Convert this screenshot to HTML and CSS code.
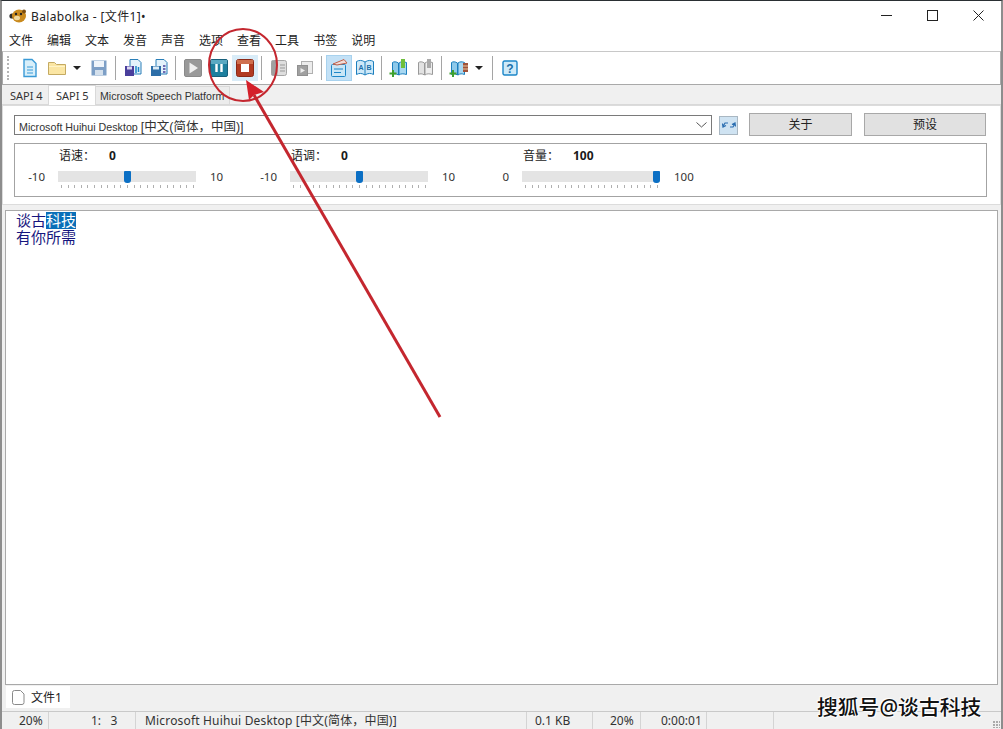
FILE: index.html
```html
<!doctype html>
<html lang="zh-CN">
<head>
  <meta charset="utf-8" />
  <title>Balabolka - [文件1]</title>
  <link rel="stylesheet" href="styles.css">
</head>
<body>
<div class="win">

  <!-- title bar -->
  <div class="titlebar">
    <svg class="appIcon" width="18" height="14" viewBox="0 0 18 14">
      <circle cx="3" cy="7" r="2.6" fill="#2b2b2b"/>
      <ellipse cx="10" cy="7" rx="7" ry="6.4" fill="#c98a1e"/>
      <ellipse cx="8" cy="9" rx="3" ry="2.2" fill="#f0d9a0"/>
      <circle cx="7" cy="5" r="1.2" fill="#222"/>
      <circle cx="12" cy="5" r="1.2" fill="#222"/>
      <circle cx="15" cy="2.5" r="2" fill="#7a4d10"/>
    </svg>
    <span class="titleText">Balabolka - [文件1]•</span>
    <div class="winBtns">
      <span class="winBtn"><svg width="11" height="11"><path d="M0 5.5H11" stroke="#222" fill="none"/></svg></span>
      <span class="winBtn"><svg width="11" height="11"><rect x=".5" y=".5" width="10" height="10" stroke="#222" fill="none"/></svg></span>
      <span class="winBtn"><svg width="11" height="11"><path d="M.5 .5L10.5 10.5M10.5 .5L.5 10.5" stroke="#222" fill="none"/></svg></span>
    </div>
  </div>

  <!-- menu -->
  <div class="menubar">
    <span>文件</span><span>编辑</span><span>文本</span><span>发音</span><span>声音</span>
    <span>选项</span><span>查看</span><span>工具</span><span>书签</span><span>说明</span>
  </div>

  <!-- toolbar -->
  <div class="toolbar">
    <span class="grip"></span>
    <span class="tb"><svg width="18" height="20" viewBox="0 0 18 20"><path d="M3 1.500H11L15 5.500V18.500H3Z" fill="#d8effa" stroke="#3a9ad6" stroke-width="1.400"/><path d="M6 9H12M6 12H12M6 15H12" stroke="#3a9ad6"/></svg></span>
    <span class="tb tbFolder"><svg width="20" height="18" viewBox="0 0 20 18"><path d="M1.500 15.500V3.500H7.500L9.500 5.500H18.500V15.500Z" fill="#fbe6a4" stroke="#c4aa62"/><path d="M2 7.500H18" stroke="#fff4c8"/></svg></span>
    <span class="tbArrow"></span>
    <span class="tb"><svg width="16" height="16" viewBox="0 0 16 16"><rect x=".5" y=".5" width="15" height="15" fill="#7d9fc6"/><rect x="3" y="1" width="10" height="6" fill="#eef4fa"/><rect x="4" y="10" width="8" height="5" fill="#d4e0ec"/></svg></span>
    <span class="sep"></span>
    <span class="tb"><svg width="20" height="20" viewBox="0 0 20 20"><path d="M7 1.500H15L18 4.500V16H7Z" fill="#e3f2fb" stroke="#2a7fb8"/><rect x="2" y="8" width="9" height="10" fill="#4a3f9c"/><rect x="4" y="8.500" width="5" height="3" fill="#dcd8f2"/><path d="M13 8V15M15.500 9V14" stroke="#1c86c8" stroke-width="1.500"/></svg></span>
    <span class="tb"><svg width="20" height="20" viewBox="0 0 20 20"><path d="M7 1.500H15L18 4.500V16H7Z" fill="#e3f2fb" stroke="#2a7fb8"/><rect x="2" y="8" width="10" height="10" fill="#2d6ea8"/><rect x="4" y="8.500" width="6" height="3" fill="#dcecf6"/><path d="M14 8H16.500M14 11H16.500M14 14H16.500" stroke="#4a3f9c" stroke-width="1.500"/></svg></span>
    <span class="sep"></span>
    <span class="tb"><svg width="18" height="18" viewBox="0 0 18 18"><rect x=".5" y=".5" width="17" height="17" rx="1.500" fill="#999" stroke="#8a8a8a"/><path d="M5.500 3.500L14 9L5.500 14.500Z" fill="#efefef"/></svg></span>
    <span class="tb"><svg width="18" height="18" viewBox="0 0 18 18"><rect x=".5" y=".5" width="17" height="17" rx="1.500" fill="#1d7f9e" stroke="#17607c"/><rect x="1" y="1" width="16" height="4" fill="#5aa9c2"/><path d="M6.500 5V13M11.500 5V13" stroke="#fff" stroke-width="2.400"/></svg></span>
    <span class="tb tbHot"><svg width="18" height="18" viewBox="0 0 18 18"><rect x=".5" y=".5" width="17" height="17" rx="2" fill="#b23b22" stroke="#8c2a18"/><rect x="1" y="1" width="16" height="4" fill="#d0704f"/><rect x="5" y="5" width="8" height="8" fill="#fff"/></svg></span>
    <span class="sep"></span>
    <span class="tb"><svg width="18" height="18" viewBox="0 0 18 18"><rect x="1.500" y="1.500" width="15" height="15" rx="2" fill="#dedede" stroke="#a5a5a5"/><rect x="1.500" y="1.500" width="6" height="15" fill="#a0a0a0"/><path d="M10 6H15M10 9H15M10 12H15" stroke="#999"/></svg></span>
    <span class="tb"><svg width="18" height="18" viewBox="0 0 18 18"><rect x="5.500" y="2.500" width="11" height="12" fill="#ececec" stroke="#b0b0b0"/><rect x="1.500" y="6.500" width="10" height="10" fill="#a0a0a0" stroke="#909090"/><path d="M4.500 9L9 11.500L4.500 14Z" fill="#eee"/></svg></span>
    <span class="sep"></span>
    <span class="tb tbOn"><svg width="20" height="20" viewBox="0 0 20 20"><rect x="2.500" y="6.500" width="14" height="12" rx="1" fill="#c9e6f6" stroke="#1c86c8"/><path d="M5 11H14M5 14.500H12" stroke="#1c86c8"/><path d="M4 6L15 1.500L18 5L8 7Z" fill="#f2dcd6" stroke="#c0604a"/></svg></span>
    <span class="tb"><svg width="20" height="18" viewBox="0 0 20 18"><path d="M10 3C7 1 4 1 1.500 2.500V15.500C4 14 7 14 10 16C13 14 16 14 18.500 15.500V2.500C16 1 13 1 10 3Z" fill="#cfe9f8" stroke="#1c7fbe"/><path d="M10 3V16" stroke="#1c7fbe"/><text x="3.500" y="10.500" class="tinyGlyph">A</text><text x="11.500" y="10.500" class="tinyGlyph">B</text></svg></span>
    <span class="sep"></span>
    <span class="tb"><svg width="20" height="20" viewBox="0 0 20 20"><path d="M3.500 4.500C5 3.500 7 3.500 9.500 5V17C7 15.500 5 15.500 3.500 16.500Z" fill="#8ec9ea" stroke="#1c7fbe"/><path d="M10 5C12 3.500 14 3.500 17.500 4.500V16.500C14 15.500 12 15.500 10 17Z" fill="#a8d8f2" stroke="#1c7fbe"/><rect x="12" y="1" width="4" height="9" fill="#6fbf3c"/><path d="M4 12V19M.5 15.500H7.500" stroke="#3fa02c" stroke-width="2"/></svg></span>
    <span class="tb"><svg width="20" height="20" viewBox="0 0 20 20"><path d="M3.500 4.500C5 3.500 7 3.500 9.500 5V17C7 15.500 5 15.500 3.500 16.500Z" fill="#e2e2e2" stroke="#999"/><path d="M10 5C12 3.500 14 3.500 17.500 4.500V16.500C14 15.500 12 15.500 10 17Z" fill="#eeeeee" stroke="#999"/><rect x="12" y="1" width="4" height="9" fill="#aaa"/></svg></span>
    <span class="sep"></span>
    <span class="tb"><svg width="20" height="20" viewBox="0 0 20 20"><path d="M2.500 4.500C4 3.500 6 3.500 8.500 5V17C6 15.500 4 15.500 2.500 16.500Z" fill="#8ec9ea" stroke="#1c7fbe"/><path d="M9 5C11 3.500 13 3.500 15.500 4.500V16.500C13 15.500 11 15.500 9 17Z" fill="#a8d8f2" stroke="#1c7fbe"/><rect x="14" y="5" width="5" height="9" fill="#a0523a"/><path d="M14 8H19M14 11H19" stroke="#e6c9a0"/><path d="M4 12V19M.5 15.500H7.500" stroke="#3fa02c" stroke-width="2"/></svg></span>
    <span class="tbArrow tbArrowWide"></span>
    <span class="sep"></span>
    <span class="tb"><svg width="16" height="16" viewBox="0 0 16 16"><rect x="1" y="1" width="14" height="14" rx="1.500" fill="#cfeaf8" stroke="#1c86c8" stroke-width="1.400"/><text x="8" y="12.500" text-anchor="middle" class="helpGlyph">?</text></svg></span>
  </div>

  <!-- engine tabs -->
  <div class="tabs">
    <span class="tab tabFirst">SAPI 4</span>
    <span class="tab tabActive">SAPI 5</span>
    <span class="tab tabLast">Microsoft Speech Platform</span>
  </div>

  <div class="panel">
    <div class="voiceRow">
      <div class="combo">
        <span>Microsoft Huihui Desktop <span class="comboCjk">[中文(简体，中国)]</span></span>
        <svg width="11" height="6"><path d="M.5 .5L5.500 5L10.500 .5" stroke="#555" fill="none"/></svg>
      </div>
      <span class="refresh"><svg width="14" height="10" viewBox="0 0 14 10"><path d="M6 3H3L1 6.500M.5 3.500L1 7L4 5.500" stroke="#2a6db0" fill="none" stroke-width="1.200"/><path d="M8 7H11L13 3.500M13.500 6.500L13 3L10 4.500" stroke="#2a6db0" fill="none" stroke-width="1.200"/></svg></span>
      <button class="btn btnAbout" type="button">关于</button>
      <button class="btn btnPreset" type="button">预设</button>
    </div>

    <div class="sliders">
      <div class="slider">
        <div class="sliderHead"><span class="sliderName">语速：</span><b>0</b></div>
        <div class="sliderRow">
          <span class="min">-10</span>
          <div class="track"><span class="thumb thumbMid"></span></div>
          <span class="max">10</span>
        </div>
        <div class="ticks"></div>
      </div>
      <div class="slider">
        <div class="sliderHead"><span class="sliderName">语调：</span><b>0</b></div>
        <div class="sliderRow">
          <span class="min">-10</span>
          <div class="track"><span class="thumb thumbMid"></span></div>
          <span class="max">10</span>
        </div>
        <div class="ticks"></div>
      </div>
      <div class="slider">
        <div class="sliderHead"><span class="sliderName">音量：</span><b>100</b></div>
        <div class="sliderRow">
          <span class="min">0</span>
          <div class="track"><span class="thumb thumbEnd"></span></div>
          <span class="max">100</span>
        </div>
        <div class="ticks"></div>
      </div>
    </div>
  </div>

  <!-- text -->
  <div class="editor">
    <div class="line">谈古<span class="sel">科技</span></div>
    <div class="line">有你所需</div>
  </div>

  <div class="docTabs">
    <span class="docTab">
      <svg width="14" height="15" viewBox="0 0 14 15"><path d="M1.500 2.500Q1.500 .5 3.500 .5H9.500L13 4V12.500Q13 14.500 11 14.500H3.500Q1.500 14.500 1.500 12.500Z" fill="#fff" stroke="#8a8a8a"/></svg>
      文件1
    </span>
  </div>

  <div class="statusbar">
    <span class="cell cZoom">20%</span>
    <span class="cell cPos">1:&nbsp;&nbsp; 3</span>
    <span class="cell cVoice">Microsoft Huihui Desktop [中文(简体，中国)]</span>
    <span class="cell cSize">0.1 KB</span>
    <span class="cell cPct">20%</span>
    <span class="cell cTime">0:00:01</span>
    <span class="cell cGap"></span>
    <span class="sizeGrip"></span>
  </div>
</div>

<!-- red annotation drawn over the window -->
<svg class="annot" width="1003" height="729" viewBox="0 0 1003 729">
  <ellipse cx="243" cy="65" rx="34" ry="36" fill="none" stroke="#c4272f" stroke-width="2"/>
  <path d="M440 417L254 95" stroke="#c4272f" stroke-width="3" fill="none"/>
  <path d="M246 80L264 92L254 95L249 100Z" fill="#d4202a"/>
</svg>

<div class="watermark">搜狐号@谈古科技</div>
</body>
</html>
```

FILE: styles.css
```css
:root{
  --font: "Noto Sans", "Noto Sans CJK SC", sans-serif;
  --narrow: "Liberation Sans", "Noto Sans CJK SC", sans-serif;
  --line: #a9a9a9;
  --face: #f0f0f0;
}

*{ box-sizing:border-box }
html, body{ margin:0; height:100%; overflow:hidden; }
body{ position:relative; font-family:var(--font); font-size:12px; color:#1a1a1a; background:#fff; }

.win{
  width:1003px; height:729px;
  display:flex; flex-direction:column;
  background:var(--face);
  border-top:1px solid #2a2f33;
  border-left:2px solid #8d8d8d;
  border-right:2px solid #8d8d8d;
}

/* title bar */
.titlebar{
  height:29px; flex:none;
  display:flex; align-items:center;
  padding-left:7px;
  background:#fff;
}
.appIcon{ margin-right:4px; }
.titleText{ font-size:12px; letter-spacing:.35px; color:#222; }
.winBtns{ margin-left:auto; display:flex; }
.winBtn{ width:46px; height:29px; display:grid; place-items:center; }

.menubar{
  height:21px; flex:none;
  display:flex; align-items:center;
  background:#fff;
}
.menubar span{ padding:1px 7px 0; line-height:20px; color:#222; }

/* toolbar */
.toolbar{
  height:34px; flex:none;
  display:flex; align-items:center;
  padding-left:4px;
  background:#fff;
  border:1px solid var(--line);
  border-top-color:#c8c8c8;
}
.grip{ width:2px; height:24px; margin-right:8px; border-left:2px dotted #b5b5b5; }
.tb{ width:26px; height:26px; flex:none; display:grid; place-items:center; }
.tbFolder{ margin-left:1px; }
.tbHot{ background:#d9ecf8; }
.tbOn{ background:#c3e1f6; border:1px solid #a8d2ee; }
.tbArrow{ width:16px; height:26px; flex:none; position:relative; }
.tbArrow::after{
  content:""; position:absolute; left:3px; top:11px;
  border:4px solid transparent; border-top:4px solid #222; border-bottom:0;
}
.tbArrowWide{ width:17px; }
.sep{ width:1px; height:24px; flex:none; margin:0 4px 0 3px; background:#a5a5a5; }
.tinyGlyph{ font:bold 7px "Liberation Sans", sans-serif; fill:#1c6fa8; }
.helpGlyph{ font:bold 12px "Liberation Sans", sans-serif; fill:#1c6fa8; }

/* engine tabs */
.tabs{
  height:20px; flex:none;
  display:flex; align-items:flex-end;
  padding-left:6px;
  border-bottom:1px solid #d9d9d9;
  white-space:nowrap;
}
.tab{ height:18px; line-height:19px; font-size:11px; color:#333; }
.tabFirst{ width:40px; padding-left:2px; }
.tabActive{
  width:48px; height:20px;
  padding-left:7px; margin-bottom:-1px;
  background:#fff;
  border:1px solid #d9d9d9; border-bottom:0;
}
.tabLast{
  width:134px; padding-left:4px;
  font-family:var(--narrow); font-size:10.600px;
  background:#ececec;
  border-top:1px solid #d9d9d9; border-right:1px solid #d9d9d9;
}

.panel{
  height:100px; flex:none;
  padding:6px 10px 0 11px;
  background:#fff;
  border:1px solid #dcdcdc;
}
.voiceRow{ display:flex; align-items:center; height:24px; }
.combo{
  width:698px; height:20px;
  display:flex; align-items:center; justify-content:space-between;
  padding:0 4px;
  border:1px solid #7a7a7a;
  font-family:var(--narrow); font-size:10.700px; color:#333;
  margin-top:2px;
}
.comboCjk{ font-size:12.500px; }
.refresh{
  width:19px; height:19px; margin:2px 0 0 7px;
  display:grid; place-items:center;
  background:#cfe3f2; border:1px solid #a9b7c2;
}
.btn{
  height:23px; padding:0;
  font:inherit; font-size:12px; color:#222;
  background:#e1e1e1;
  border:1px solid #a8a8a8;
}
.btnAbout{ width:103px; margin-left:11px; }
.btnPreset{ width:122px; margin-left:12px; }

.sliders{
  display:flex;
  width:973px; height:54px;
  margin-top:7px;
  padding:4px 0 0 13px;
  border:1px solid #a3a3a3;
}
.slider{ width:232px; }
.sliderHead{ display:flex; height:16px; line-height:16px; padding-left:31px; }
.sliderName{ width:50px; }
.sliderHead b{ font-weight:700; }
.sliderRow{ display:flex; align-items:center; height:13px; margin-top:6px; }
.min{ width:30px; padding-right:13px; text-align:right; color:#333; font-size:11.500px; flex:none; }
.track{ width:138px; height:11px; position:relative; background:#e4e4e4; flex:none; }
.max{ padding-left:14px; color:#333; font-size:11.500px; }
.thumb{
  position:absolute; top:0; width:7px; height:12px;
  background:#0b6fc4;
  border-radius:1px 1px 3px 3px;
}
.thumbMid{ left:66px; }
.thumbEnd{ left:131px; }
.ticks{
  width:133px; height:3px; margin:2px 0 0 33px;
  background:repeating-linear-gradient(to right, #b0b0b0 0 1px, transparent 1px 6.600px);
}

/* text */
.editor{
  height:475px; flex:none;
  margin:5px 3px 0 3px;
  padding:1px 10px;
  background:#fff;
  border:1px solid #a9a9a9;
  font-size:15px;
  color:#16167e;
}
.line{ height:17px; line-height:17px; }
.sel{ display:inline-block; height:17px; line-height:17px; vertical-align:top; background:#0a6fb8; color:#fff; }

.docTabs{ height:26px; flex:none; padding:1px 0 0 4px; }
.docTab{
  width:64px; height:22px;
  display:flex; align-items:center; gap:6px;
  padding-left:5px;
  background:#fff;
  color:#222;
}

.statusbar{
  flex:1;
  display:flex;
  border-top:1px solid #c9c9c9;
  color:#333;
  white-space:nowrap;
}
.cell{ height:17px; line-height:17px; border-right:1px solid #d4d4d4; font-size:12px; flex:none; }
.cZoom{ width:47px; padding-left:17px; }
.cPos{ width:87px; padding-left:42px; }
.cVoice{ width:391px; padding-left:9px; letter-spacing:.17px; }
.cSize{ width:66px; padding-left:8px; }
.cPct{ width:48px; padding-left:17px; }
.cTime{ width:66px; padding-left:20px; }
.cGap{ width:67px; }
.sizeGrip{
  width:7px; height:7px; margin:auto 1px 1px auto;
  background:radial-gradient(circle at 1px 1px, #aaa 1px, transparent 1px) 0 0/3px 3px;
}

/* overlays */
.annot{ position:absolute; left:0; top:0; pointer-events:none; }
.watermark{
  position:absolute; left:817px; top:694px;
  font-size:20.800px; line-height:26px; font-weight:500; white-space:nowrap;
  color:#111;
  text-shadow:0 0 2px #fff, 0 0 2px #fff, 1px 1px 1px #fff, -1px -1px 1px #fff;
}
```
